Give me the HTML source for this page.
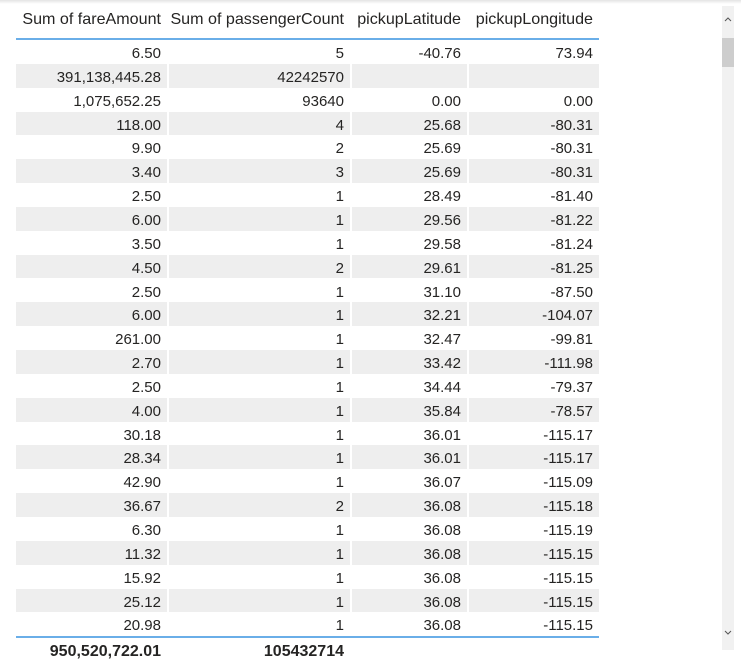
<!DOCTYPE html>
<html><head><style>
*{margin:0;padding:0;box-sizing:border-box}
body{width:741px;height:661px;background:#fff;font-family:"Liberation Sans",sans-serif;color:#252423;position:relative;overflow:hidden}
.shadow{position:absolute;left:0;top:0;width:741px;height:4px;background:linear-gradient(#e4e4e4,#fff)}
.row{position:absolute;left:16px;height:24px;width:583px}
.c{position:absolute;top:0;height:100%;text-align:right;font-size:15px;line-height:24px;padding-top:2px;padding-right:6px;white-space:nowrap}
.g .c{background:#eeeeee}
.c1{left:0;width:151px}.c2{left:153px;width:181px}.c3{left:336px;width:115px}.c4{left:453px;width:130px}
.hdr .c{font-size:16.1px;line-height:38px;padding-top:0}
.tot .c{font-weight:bold;font-size:16px}
.line{position:absolute;left:16px;width:583px;height:2px;background:#6aaee8}
.sb{position:absolute;left:722px;top:6px;width:12px;height:644px;background:#f1f1f1}
.th{position:absolute;left:722px;top:38px;width:12px;height:29px;background:#cdcdcd}
</style></head><body>
<div class="shadow"></div>
<div class="row hdr" style="top:0;height:38px"><div class="c c1">Sum of fareAmount</div><div class="c c2">Sum of passengerCount</div><div class="c c3">pickupLatitude</div><div class="c c4">pickupLongitude</div></div>
<div class="line" style="top:38px"></div>
<div id="rows"></div>
<div class="line" style="top:636px"></div>
<div class="row tot" style="top:638px"><div class="c c1">950,520,722.01</div><div class="c c2">105432714</div></div>
<div class="sb"></div><div class="th"></div>
<svg style="position:absolute;left:722px;top:15px" width="12" height="10"><path d="M3 6 L6 3 L9 6" fill="none" stroke="#555" stroke-width="1"/></svg>
<svg style="position:absolute;left:722px;top:628px" width="12" height="10"><path d="M3 3 L6 6 L9 3" fill="none" stroke="#555" stroke-width="1"/></svg>
<script>
var d=[["6.50","5","-40.76","73.94"],["391,138,445.28","42242570","",""],["1,075,652.25","93640","0.00","0.00"],["118.00","4","25.68","-80.31"],["9.90","2","25.69","-80.31"],["3.40","3","25.69","-80.31"],["2.50","1","28.49","-81.40"],["6.00","1","29.56","-81.22"],["3.50","1","29.58","-81.24"],["4.50","2","29.61","-81.25"],["2.50","1","31.10","-87.50"],["6.00","1","32.21","-104.07"],["261.00","1","32.47","-99.81"],["2.70","1","33.42","-111.98"],["2.50","1","34.44","-79.37"],["4.00","1","35.84","-78.57"],["30.18","1","36.01","-115.17"],["28.34","1","36.01","-115.17"],["42.90","1","36.07","-115.09"],["36.67","2","36.08","-115.18"],["6.30","1","36.08","-115.19"],["11.32","1","36.08","-115.15"],["15.92","1","36.08","-115.15"],["25.12","1","36.08","-115.15"],["20.98","1","36.08","-115.15"]];
var h="";d.forEach(function(r,i){h+='<div class="row'+(i%2?' g':'')+'" style="top:'+(40+i*23.85)+'px;height:23.85px">'+r.map(function(v,j){return '<div class="c c'+(j+1)+'">'+v+'</div>'}).join('')+'</div>'});
document.getElementById('rows').innerHTML=h;
</script>
</body></html>
